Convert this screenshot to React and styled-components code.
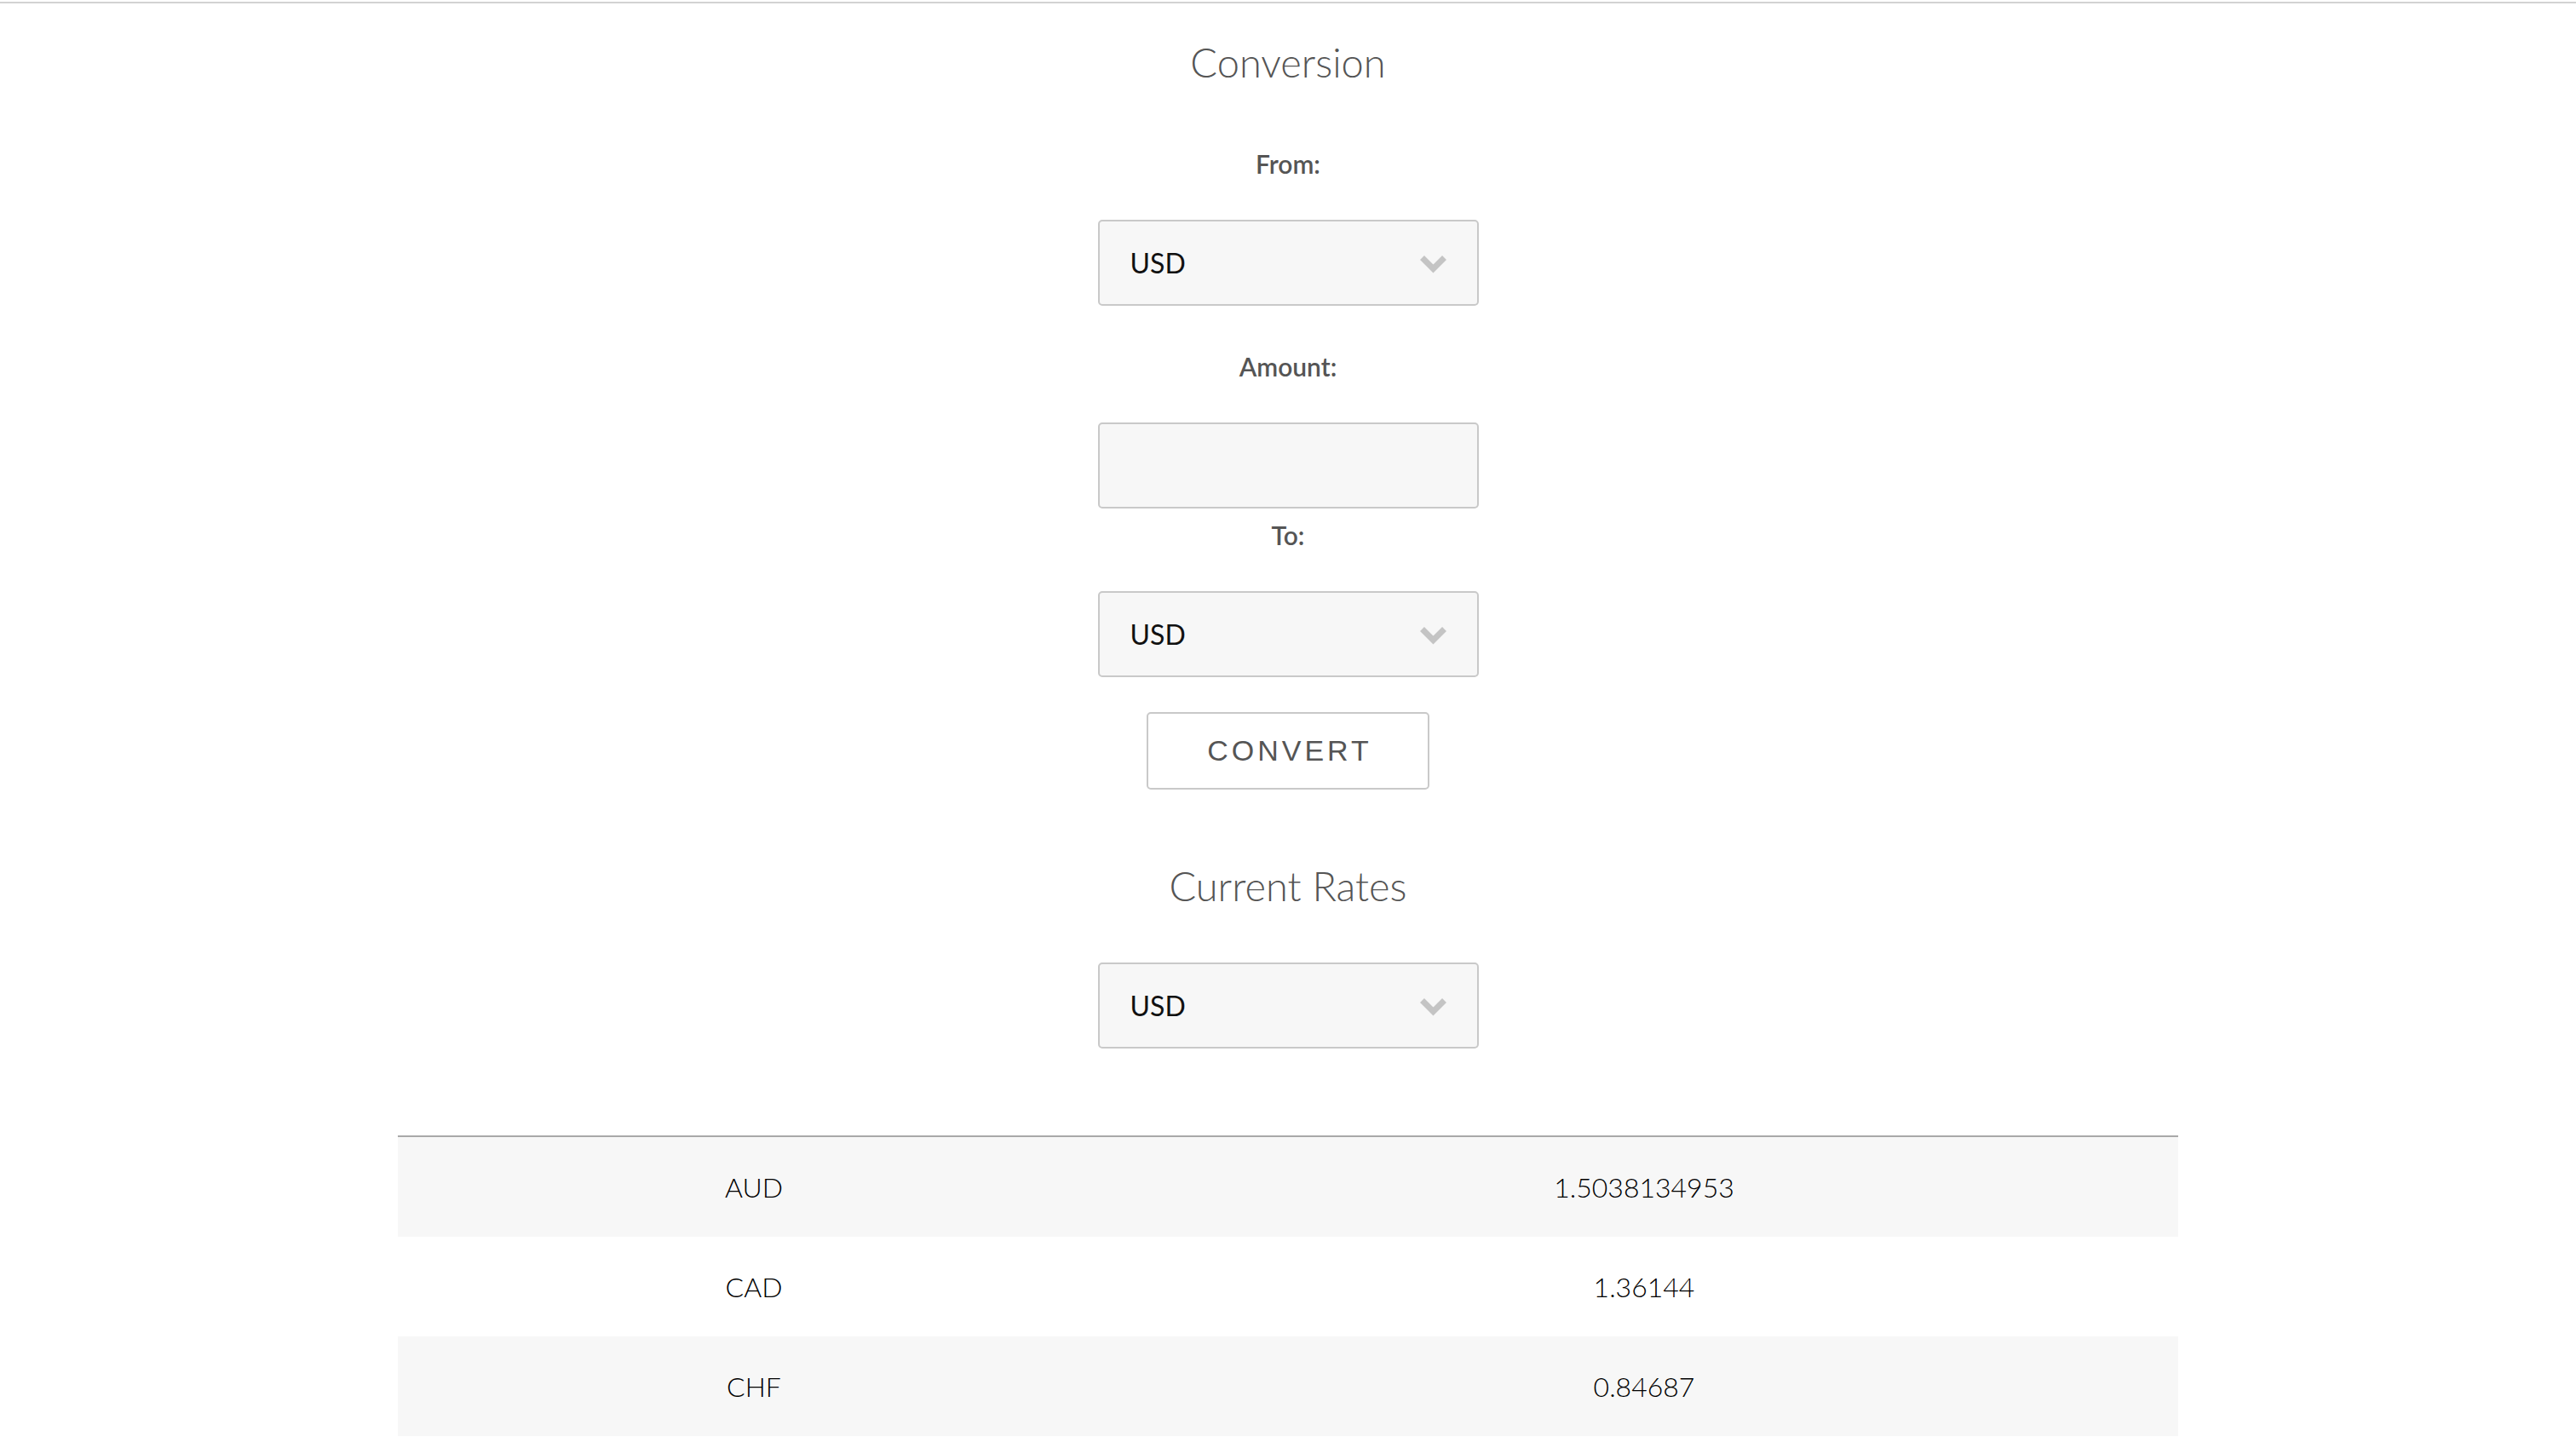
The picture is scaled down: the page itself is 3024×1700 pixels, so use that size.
import React, { useState } from "react";
import styled, { createGlobalStyle } from "styled-components";

const GlobalStyle = createGlobalStyle`
  html, body {
    margin: 0;
    padding: 0;
    background: #fff;
  }
  body {
    font-family: "Lato", "Open Sans", sans-serif;
    color: #222;
  }
`;

const currencies = ["USD", "AUD", "CAD", "CHF", "EUR", "GBP", "JPY"];

const rates = [
  { code: "AUD", rate: "1.5038134953" },
  { code: "CAD", rate: "1.36144" },
  { code: "CHF", rate: "0.84687" }
];

const Page = styled.div`
  margin-top: 2px;
  border-top: 2px solid #d2d2d2;
  display: flex;
  flex-direction: column;
  align-items: center;
`;

const Title = styled.h2`
  margin: ${props => props.$top}px 0 0;
  font-size: 47px;
  font-weight: 300;
  line-height: 57px;
  color: #555;
`;

const FieldLabel = styled.label`
  display: block;
  margin-top: ${props => props.$top}px;
  font-size: 30px;
  font-weight: 600;
  line-height: 36px;
  color: #555;
`;

const SelectWrap = styled.div`
  position: relative;
  width: 447px;
  height: 101px;
  margin-top: ${props => props.$top}px;
`;

const fieldStyles = `
  box-sizing: border-box;
  width: 100%;
  height: 100%;
  border: 2px solid #c9c9c9;
  border-radius: 5px;
  background: #f7f7f7;
  font-family: "Lato", "Open Sans", sans-serif;
  font-size: 32px;
  color: #111;
  outline: none;
`;

const Select = styled.select`
  ${fieldStyles}
  appearance: none;
  -webkit-appearance: none;
  padding: 0 0 0 36px;
  cursor: pointer;
`;

const Chevron = styled.svg`
  position: absolute;
  right: 38px;
  top: 42px;
  pointer-events: none;
`;

const AmountInput = styled.input`
  ${fieldStyles}
  display: block;
  width: 447px;
  height: 101px;
  margin-top: ${props => props.$top}px;
  padding: 0 36px;
`;

const ConvertButton = styled.button`
  box-sizing: border-box;
  width: 332px;
  height: 91px;
  margin-top: ${props => props.$top}px;
  padding: 0 0 0 4px;
  border: 2px solid #c9c9c9;
  border-radius: 5px;
  background: #fff;
  font-family: "Liberation Sans", Arial, sans-serif;
  font-size: 34px;
  letter-spacing: 4px;
  text-transform: uppercase;
  color: #555;
  cursor: pointer;
`;

const RatesTable = styled.table`
  width: 2090px;
  margin-top: ${props => props.$top}px;
  border-collapse: collapse;
  border-top: 2px solid #a9a9a9;
`;

const Row = styled.tr`
  background: ${props => (props.$striped ? "#f7f7f7" : "#fff")};
`;

const Cell = styled.td`
  width: ${props => props.$width};
  padding: 40px 0;
  text-align: center;
  font-size: 32px;
  font-weight: 300;
  line-height: 37px;
  color: #000;
`;

const CurrencySelect = ({ top, value, onChange }) => (
  <SelectWrap $top={top}>
    <Select value={value} onChange={e => onChange(e.target.value)}>
      {currencies.map(c => (
        <option key={c} value={c}>
          {c}
        </option>
      ))}
    </Select>
    <Chevron width="31" height="21" viewBox="0 0 31 21">
      <polyline
        points="2.5,2.5 15.5,15.5 28.5,2.5"
        fill="none"
        stroke="#c4c4c4"
        strokeWidth="7"
        strokeLinejoin="miter"
      />
    </Chevron>
  </SelectWrap>
);

const App = () => {
  const [from, setFrom] = useState("USD");
  const [to, setTo] = useState("USD");
  const [base, setBase] = useState("USD");
  const [amount, setAmount] = useState("");

  return (
    <>
      <GlobalStyle />
      <Page>
        <Title $top={41}>Conversion</Title>
        <FieldLabel $top={72}>From:</FieldLabel>
        <CurrencySelect top={48} value={from} onChange={setFrom} />
        <FieldLabel $top={53}>Amount:</FieldLabel>
        <AmountInput
          $top={48}
          type="text"
          value={amount}
          onChange={e => setAmount(e.target.value)}
        />
        <FieldLabel $top={13}>To:</FieldLabel>
        <CurrencySelect top={48} value={to} onChange={setTo} />
        <ConvertButton $top={41}>Convert</ConvertButton>

        <Title $top={85}>Current Rates</Title>
        <CurrencySelect top={61} value={base} onChange={setBase} />
        <RatesTable $top={102}>
          <tbody>
            {rates.map((r, i) => (
              <Row key={r.code} $striped={i % 2 === 0}>
                <Cell $width="40%">{r.code}</Cell>
                <Cell $width="60%">{r.rate}</Cell>
              </Row>
            ))}
          </tbody>
        </RatesTable>
      </Page>
    </>
  );
};

export default App;
